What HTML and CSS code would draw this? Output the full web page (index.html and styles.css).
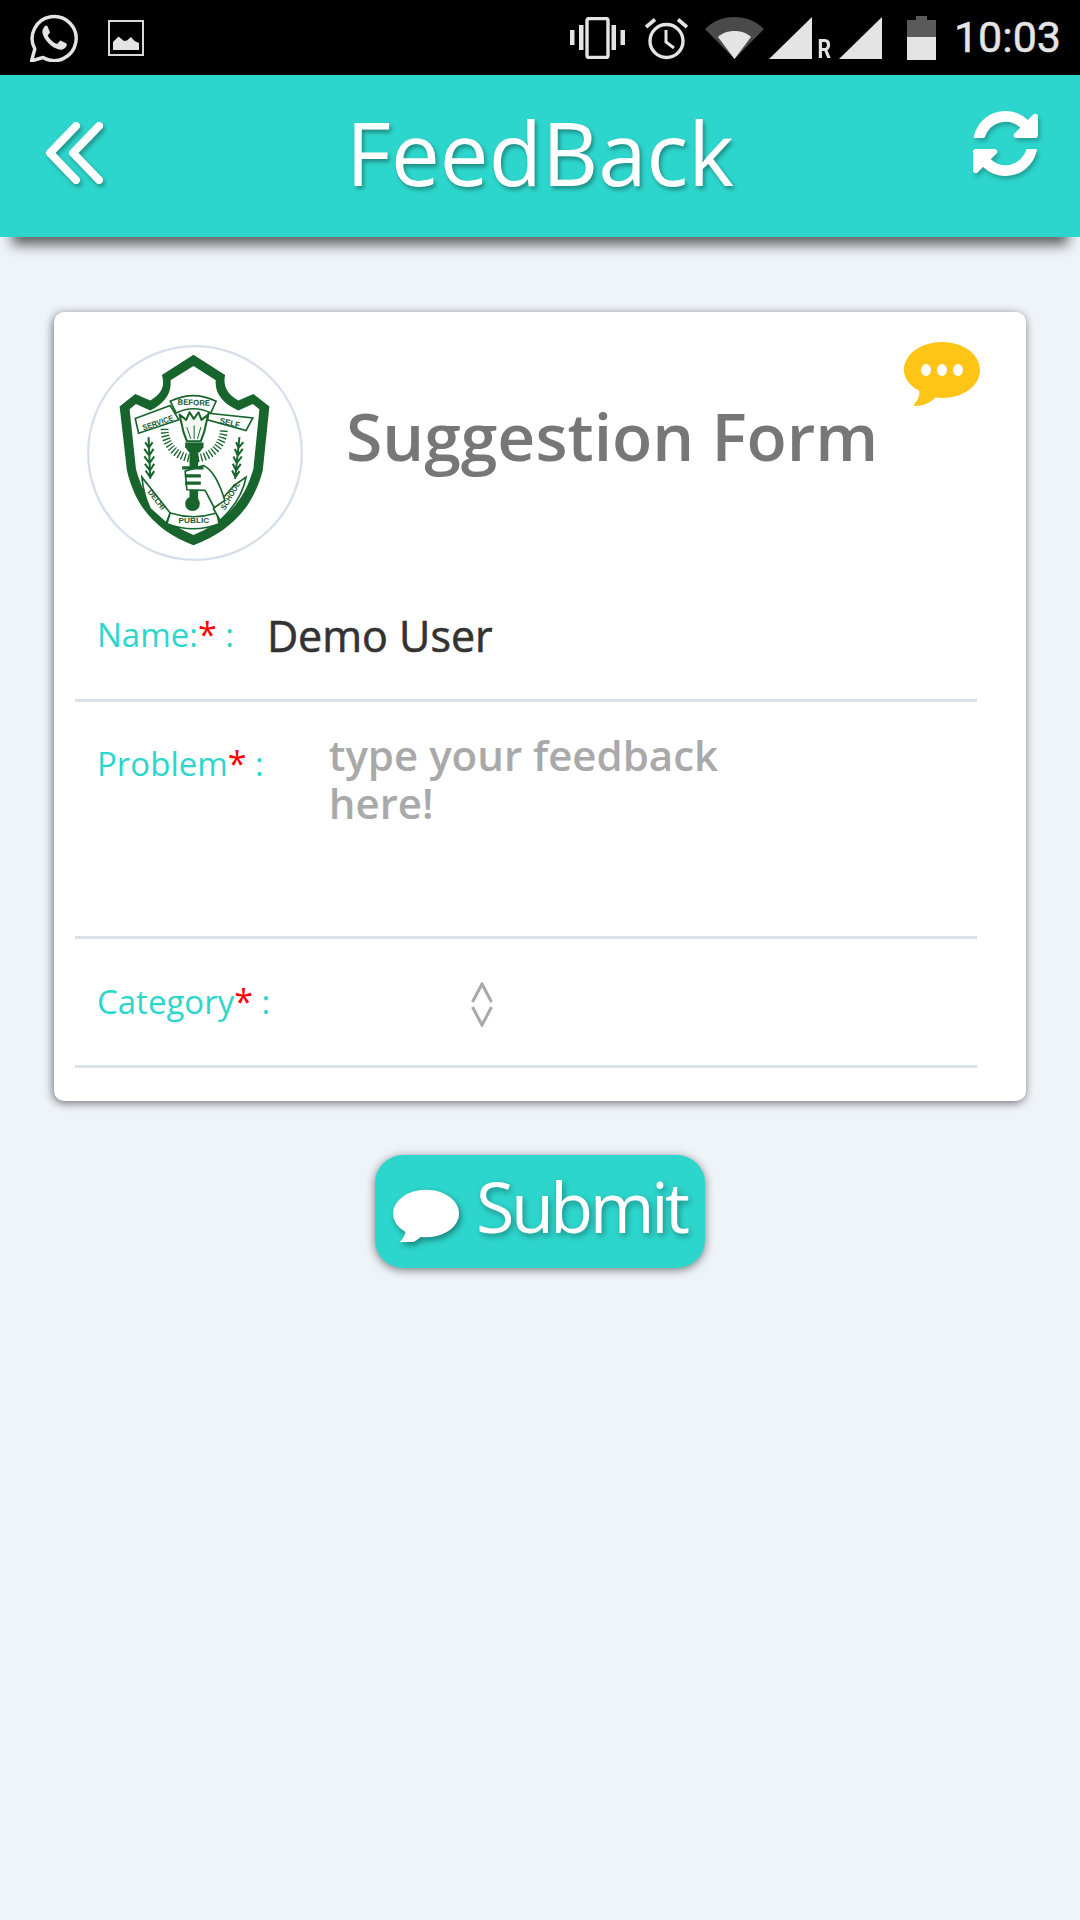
FILE: index.html
```html
<!DOCTYPE html>
<html lang="en">
<head>
<meta charset="utf-8">
<title>FeedBack</title>
<link rel="stylesheet" href="styles.css">
</head>
<body>
<div class="status">
  <div class="status-group">
    <svg class="ic-wa" viewBox="0 0 48 48"><path d="M1.500 47l3.300-12A22 22 0 1 1 13 43.500z" fill="none" stroke="#e4e4e4" stroke-width="3.400" stroke-linejoin="round"/><path d="M16 11.500c-2 1-4 4-3.500 7.500 1 6 9 15 16.500 16.500 3.500.7 6.500-1 7.500-3.500.4-1 .4-2 0-2.500l-5.500-2.800c-.6-.2-1 0-1.400.5l-2 2.300c-.4.400-.8.400-1.400.2-3-1.400-6.600-4.500-8.200-7.500-.3-.6-.2-1 .2-1.400l1.500-1.800c.3-.4.300-.8.100-1.300l-2.200-5.300c-.3-.6-.5-.8-1.600-.9z" fill="#e4e4e4"/></svg>
    <svg class="ic-img" viewBox="0 0 36 36"><rect x="1" y="1" width="34" height="34" fill="none" stroke="#d8d8d8" stroke-width="2"/><path d="M5 30V22l5.500-5.500L16 21l3-.5 4-3.500 3.500 4 4.500 2v7z" fill="#e4e4e4"/></svg>
  </div>
  <div class="status-group">
    <svg class="ic-vib" viewBox="0 0 55 42"><path d="M0 13h4.500v15H0zM9 8h4.500v25H9zM41.500 8H46v25h-4.500zM50.500 13H55v15h-4.500z" fill="#e4e4e4"/><rect x="17" y="1.500" width="21" height="39" rx="2" fill="none" stroke="#e4e4e4" stroke-width="3.400"/></svg>
    <svg class="ic-alarm" viewBox="0 0 43 44"><circle cx="21.500" cy="25" r="16.500" fill="none" stroke="#e4e4e4" stroke-width="3.400"/><path d="M21 14v12l8 6" fill="none" stroke="#e4e4e4" stroke-width="3"/><path d="M1 11 10 3.500M42 11 33 3.500" stroke="#e4e4e4" stroke-width="3.600"/></svg>
    <svg class="ic-wifi" viewBox="0 0 59 42"><path d="M0 12C8 4 18 0 29.500 0S51 4 59 12L29.500 42z" fill="#4a4a4a"/><path d="M13 20c4-4 10-6 16.500-6S42 16 46 20L29.500 42z" fill="#e4e4e4"/></svg>
    <svg class="ic-sig" viewBox="0 0 43 42"><path d="M0 42 43 0v42z" fill="#e4e4e4"/></svg>
    <span class="roam">R</span>
    <svg class="ic-sig" viewBox="0 0 43 42"><path d="M0 42 43 0v42z" fill="#e4e4e4"/></svg>
    <svg class="ic-bat" viewBox="0 0 29 44"><path d="M9 0h11v4h9v17H0V4h9z" fill="#5a5a5a"/><path d="M0 21h29v23H0z" fill="#e4e4e4"/></svg>
    <span class="time">10:03</span>
  </div>
</div>

<header class="appbar">
  <svg class="ic-back" viewBox="0 0 62 62"><path d="M31 4 5 31l26 27M54 4 28 31l26 27" fill="none" stroke="#fff" stroke-width="8" stroke-linecap="round" stroke-linejoin="round"/></svg>
  <h1 class="appbar-title">FeedBack</h1>
  <svg class="ic-refresh" viewBox="128 128 1536 1536"><path fill="#fff" d="M1639 1056q0 5-1 7-64 268-268 434.500t-478 166.500q-146 0-282.500-55t-243.500-157l-129 129q-19 19-45 19t-45-19-19-45v-448q0-26 19-45t45-19h448q26 0 45 19t19 45-19 45l-137 137q71 66 161 102t187 36q134 0 250-65t186-179q11-17 53-117 8-23 30-23h192q13 0 22.500 9.500t9.500 22.500zm25-800v448q0 26-19 45t-45 19h-448q-26 0-45-19t-19-45 19-45l138-138q-148-137-349-137-134 0-250 65t-186 179q-11 17-53 117-8 23-30 23h-199q-13 0-22.500-9.500t-9.500-22.500v-7q65-268 270-434.500t480-166.500q146 0 284 55.500t245 156.500l130-129q19-19 45-19t45 19 19 45z"/></svg>
</header>

<main class="content">
  <section class="card">
    <svg class="ic-chat" viewBox="0 0 76 64"><path fill="#fec516" d="M38 0C59 0 76 12 76 28S59 56 38 56c-2.500 0-4.500-.2-6.500-.5C27 60.500 20 63.500 11 64c-1 0-1.500-1-.8-1.800 3.500-3.500 5.800-8.500 5-13.500C6 44 0 36.500 0 28 0 12 17 0 38 0z"/><ellipse cx="22" cy="28" rx="5" ry="6" fill="#fff"/><ellipse cx="38" cy="28" rx="5" ry="6" fill="#fff"/><ellipse cx="54" cy="28" rx="5" ry="6" fill="#fff"/></svg>
    <div class="card-head">
      <svg class="logo" viewBox="50 43 649 649">
        <circle cx="374.500" cy="367.500" r="321" fill="#fff" stroke="#d6dfea" stroke-width="7"/>
        <path fill="#17642c" d="M370 72 465 133C458 165 470 190 505 210L550 190 598 228 578 420C545 545 470 605 370 645 270 605 200 545 170 420L148 228 195 190 240 210C275 190 285 165 275 133z"/>
        <path fill="#fff" d="M370 106 437 149C433 185 455 218 505 240L548 220 568 236 550 415C520 525 450 580 370 614 290 580 225 525 197 415L178 236 197 220 240 240C285 218 305 185 301 149z"/>
        <g class="ribbon">
          <path d="M195 264 300 225 326 268 205 308z"/>
          <path d="M300 212Q370 178 438 212L422 247Q370 222 318 247z"/>
          <path d="M415 248 548 262 528 300 412 268z"/>
          <path d="M215 440 240 472 300 548 288 578 240 535Q220 495 215 440z"/>
          <path d="M300 548Q370 570 440 548L447 580Q370 610 290 580z"/>
          <path d="M528 440Q515 510 450 570L430 535 492 465z"/>
        </g>
        <g class="logo-text">
          <text x="262" y="285" transform="rotate(-19 262 275)" text-anchor="middle" textLength="96" lengthAdjust="spacingAndGlyphs">SERVICE</text>
          <text x="371" y="224" transform="rotate(2 371 220)" text-anchor="middle" textLength="98" lengthAdjust="spacingAndGlyphs">BEFORE</text>
          <text x="480" y="285" transform="rotate(13 480 275)" text-anchor="middle" textLength="62" lengthAdjust="spacingAndGlyphs">SELF</text>
          <text x="262" y="517" transform="rotate(52 262 505)" text-anchor="middle" textLength="70" lengthAdjust="spacingAndGlyphs">DELHI</text>
          <text x="371" y="578" text-anchor="middle" textLength="92" lengthAdjust="spacingAndGlyphs">PUBLIC</text>
          <text x="480" y="507" transform="rotate(-60 478 497)" text-anchor="middle" textLength="92" lengthAdjust="spacingAndGlyphs">SCHOOL</text>
        </g>
        <path class="rays" d="M283 295A89 89 0 0 0 461 295"/>
        <path fill="#f4f6f2" stroke="#17642c" stroke-width="6" stroke-linejoin="round" d="M340 305 328 252 348 268 358 245 371 265 385 245 394 268 414 252 402 305 392 332H350z"/>
        <path d="M350 290 362 325M372 285V325M392 290 382 325" stroke="#17642c" stroke-width="3" fill="none"/>
        <path fill="#17642c" d="M345 336H400V350L388 366H357L345 350z"/>
        <rect x="358" y="360" width="26" height="160" fill="#17642c"/>
        <circle cx="367" cy="520" r="22" fill="#17642c"/>
        <path fill="#fff" stroke="#17642c" stroke-width="5" stroke-linejoin="round" d="M345 422 400 405C432 420 452 470 464 510L432 532 405 480 350 478z"/>
        <path d="M336 412H400M344 436H392M345 458H392" stroke="#17642c" stroke-width="10" fill="none"/>
        <g class="fern">
          <path d="M235 320 240 445M225 335 236 352 247 335M222 355 237 375 250 355M222 378 238 398 252 378M224 400 239 420 252 400M226 420 240 440 252 422"/>
          <path d="M508 320 495 445M498 335 505 352 520 335M494 355 503 375 518 355M490 378 500 398 515 378M488 400 498 420 512 400M486 420 496 440 508 422"/>
        </g>
      </svg>
      <h2 class="card-title">Suggestion Form</h2>
    </div>

    <div class="row row-name">
      <span class="label">Name:<span class="req">*</span> :</span>
      <span class="value">Demo User</span>
    </div>
    <div class="row row-problem">
      <span class="label">Problem<span class="req">*</span> :</span>
      <span class="placeholder">type your feedback<br>here!</span>
    </div>
    <div class="row row-category">
      <span class="label">Category<span class="req">*</span> :</span>
      <svg class="ic-select" viewBox="0 0 22 45"><path d="M1.500 20 11 2l9.500 18M1.500 25 11 43l9.500-18" fill="none" stroke="#a9a9a9" stroke-width="3"/></svg>
    </div>
  </section>

  <button class="submit" type="button">
    <svg class="ic-bubble" viewBox="0 128 1792 1536" preserveAspectRatio="none"><path fill="#fff" d="M1792 896q0 174-120 321.500t-326 233-450 85.500q-70 0-145-8-198 175-460 242-49 14-114 22-17 2-30.500-9t-17.500-29v-1q-3-4-.5-12t2-10 4.500-9.500l6-9 7-8.500 8-9q7-8 31-34.500t34.500-38 31-39.500 32.500-51 27-59 26-76q-157-89-247.500-220t-90.500-281q0-130 71-248.500t191-204.500 286-136.500 348-50.500q244 0 450 85.500t326 233 120 321.500z"/></svg>
    <span class="submit-text">Submit</span>
  </button>
</main>
</body>
</html>
```
FILE: styles.css
```css
* { box-sizing: border-box; }
html, body { margin: 0; padding: 0; }
body {
  width: 1080px;
  height: 1920px;
  background: #eff4f9;
  font-family: "Open Sans", sans-serif;
  overflow: hidden;
}
.status {
  height: 75px;
  background: #000;
  display: flex;
  justify-content: space-between;
  align-items: center;
  padding: 0 19px 0 30px;
}
.status-group { display: flex; align-items: center; }
.ic-wa { width: 48px; height: 48px; margin-right: 30px; }
.ic-img { width: 36px; height: 36px; }
.ic-vib { width: 55px; height: 42px; margin-right: 20px; }
.ic-alarm { width: 43px; height: 44px; margin-right: 17px; }
.ic-wifi { width: 59px; height: 42px; margin-right: 5px; }
.ic-sig { width: 43px; height: 42px; }
.roam {
  font: 700 25px "Roboto", sans-serif;
  color: #e4e4e4;
  width: 27px;
  align-self: flex-end;
  padding-left: 4px;
  line-height: 20px;
  transform: scaleX(0.85);
}
.ic-bat { width: 29px; height: 44px; margin-left: 25px; margin-right: 18px; }
.time { font: 400 43px "Roboto", sans-serif; color: #e4e4e4; line-height: 1; -webkit-text-stroke: 0.5px #e4e4e4; }

.appbar {
  height: 162px;
  background: #2dd6cc;
  display: flex;
  align-items: center;
  justify-content: space-between;
  padding: 0 42px 0 45px;
  box-shadow: 0 20px 12px -12px rgba(0, 0, 0, 0.6);
  position: relative;
}
.appbar-title {
  margin: 0 0 8px;
  font-size: 87px;
  font-weight: 400;
  line-height: 1;
  color: #fff;
  text-shadow: 2px 3px 4px rgba(0, 0, 0, 0.35);
}
.ic-back { width: 62px; height: 62px; margin-top: -7px; filter: drop-shadow(2px 3px 2px rgba(0, 0, 0, 0.3)); }
.ic-refresh { width: 65px; height: 65px; margin-top: -26px; filter: drop-shadow(2px 3px 2px rgba(0, 0, 0, 0.25)); }

.content { display: flex; flex-direction: column; align-items: center; padding-top: 75px; }
.card {
  width: 972px;
  height: 789px;
  background: #fff;
  border-radius: 10px;
  box-shadow: -1px 2px 10px rgba(0, 0, 0, 0.55);
  position: relative;
  padding: 33px 49px 0 21px;
}
.ic-chat { position: absolute; top: 30px; right: 46px; width: 76px; height: 64px; }
.card-head { display: flex; align-items: center; height: 215px; }
.logo { width: 216px; height: 216px; margin-left: 12px; flex: none; }
.card-title {
  margin: 0 0 36px 43px;
  font-size: 66px;
  font-weight: 600;
  color: #777;
  line-height: 1;
}
.ribbon path { fill: #fff; stroke: #17642c; stroke-width: 5; }
.logo-text text { font: 700 24px "Liberation Sans", sans-serif; fill: #1d5a2e; }
.rays { fill: none; stroke: #17642c; stroke-width: 24; stroke-dasharray: 4 6; }
.fern path { fill: none; stroke: #17642c; stroke-width: 6; }

.row { border-bottom: 3px solid #d9e1e9; display: flex; position: relative; }
.row-name { height: 142px; align-items: flex-start; padding: 52px 0 0 22px; }
.row-problem { height: 237px; padding: 39px 0 0 22px; }
.row-category { height: 129px; padding: 40px 0 0 22px; }
.label { font-size: 33px; color: #2dd6cc; white-space: nowrap; line-height: 44px; }
.req { color: #f00; font-size: 34px; }
.value { font-size: 43px; font-weight: 400; color: #333; -webkit-text-stroke: 0.6px #333; margin-left: 33px; line-height: 44px; margin-top: 2px; }
.placeholder { font-size: 42px; font-weight: 600; color: #a9a9a9; line-height: 48px; margin-left: 65px; margin-top: -10px; }
.ic-select { position: absolute; left: 396px; top: 43px; width: 22px; height: 45px; }

.submit {
  width: 330px;
  height: 113px;
  margin-top: 54px;
  border: 0;
  padding: 0 0 12px 18px;
  border-radius: 28px;
  background: #2dd6cc;
  box-shadow: 0 2px 10px rgba(0, 0, 0, 0.5);
  display: flex;
  align-items: center;
  font-family: "Open Sans", sans-serif;
  font-size: 70px;
  letter-spacing: -3.500px;
  color: #fff;
  text-shadow: 2px 3px 6px rgba(0, 0, 0, 0.35);
}
.ic-bubble { width: 66px; height: 57px; margin-right: 17px; margin-top: 15px; flex: none; filter: drop-shadow(2px 3px 3px rgba(0, 0, 0, 0.4)); }
```
